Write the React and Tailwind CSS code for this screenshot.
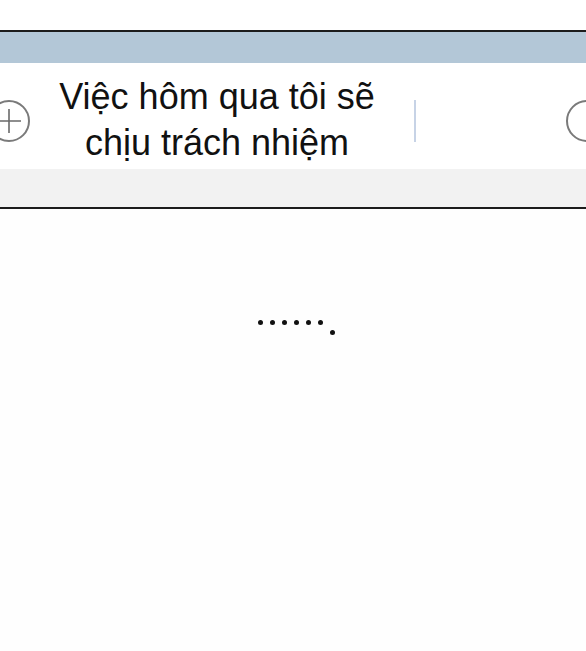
export default function App() {
  const dots = [0, 1, 2, 3, 4, 5]

  return (
    <div className="w-[586px] h-[651px] bg-white overflow-hidden flex flex-col" style={{ fontFamily: '"Liberation Sans", Arial, sans-serif' }}>
      {/* top margin */}
      <div className="h-[30px] shrink-0 bg-white" />

      {/* panel */}
      <div className="shrink-0 border-t-2 border-b-2 border-[#1c1c1c] flex flex-col">
        <div className="h-[31px] bg-[#b3c7d7]" />

        <div className="h-[106px] bg-white flex items-center overflow-hidden">
          <div className="shrink-0 -ml-[12px] mt-[10px] w-[42px] h-[42px] rounded-full border-2 border-[#7a7a7a] flex items-center justify-center">
            <svg width="26" height="26" viewBox="0 0 26 26" className="text-[#6a6a6a]">
              <path d="M13 1v24M1 13h24" stroke="currentColor" strokeWidth="1.6" fill="none" />
            </svg>
          </div>

          <div className="shrink-0 ml-[19px] w-[336px] pt-[8px] text-center text-[36px] leading-[46px] text-[#111]">
            <p>Việc hôm qua tôi sẽ</p>
            <p>chịu trách nhiệm</p>
          </div>

          <div className="shrink-0 ml-[29px] mt-[10px] w-[2px] h-[42px] bg-[#c7d3e6]" />

          <div className="shrink-0 ml-auto -mr-[22px] mt-[10px] w-[42px] h-[42px] rounded-full border-2 border-[#7a7a7a]" />
        </div>

        <div className="h-[38px] bg-[#f2f2f2]" />
      </div>

      {/* lower panel */}
      <div className="flex-1 bg-[#fefefe] flex justify-center pt-[111px]">
        <div className="flex items-start gap-[7px] pl-[6px]">
          {dots.map((d) => (
            <span key={d} className="w-[5px] h-[5px] rounded-full bg-[#111]" />
          ))}
          <span className="w-[5px] h-[5px] rounded-full bg-[#111] mt-[10px]" />
        </div>
      </div>
    </div>
  )
}
